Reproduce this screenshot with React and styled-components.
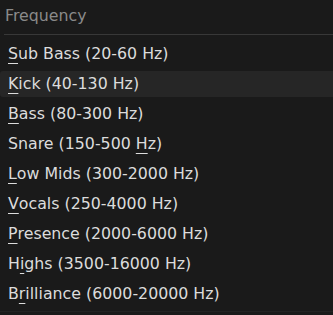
import React from 'react';
import styled, { createGlobalStyle } from 'styled-components';

const GlobalStyle = createGlobalStyle`
  html, body {
    margin: 0;
    padding: 0;
    background: #1a1a1a;
  }
  body {
    font-family: "DejaVu Sans", sans-serif;
  }
  * {
    box-sizing: border-box;
  }
`;

const bands = [
  { pre: '', key: 'S', post: 'ub Bass (20-60 Hz)' },
  { pre: '', key: 'K', post: 'ick (40-130 Hz)', active: true },
  { pre: '', key: 'B', post: 'ass (80-300 Hz)' },
  { pre: 'Snare (150-500 ', key: 'H', post: 'z)' },
  { pre: '', key: 'L', post: 'ow Mids (300-2000 Hz)' },
  { pre: '', key: 'V', post: 'ocals (250-4000 Hz)' },
  { pre: '', key: 'P', post: 'resence (2000-6000 Hz)' },
  { pre: 'H', key: 'i', post: 'ghs (3500-16000 Hz)' },
  { pre: 'B', key: 'r', post: 'illiance (6000-20000 Hz)' },
];

const App = () => (
  <Menu>
    <GlobalStyle />
    <Title>Frequency</Title>
    <Separator />
    <List>
      {bands.map((b) => (
        <Item key={b.pre + b.key + b.post} active={b.active}>
          {b.pre}
          <Mnemonic>{b.key}</Mnemonic>
          {b.post}
        </Item>
      ))}
    </List>
  </Menu>
);
export default App;

const Menu = styled.div`
  width: 333px;
  height: 312px;
  background: #1a1a1a;
  border-bottom: 1px solid #232323;
  display: flex;
  flex-direction: column;
  overflow: hidden;
`;

const Title = styled.div`
  height: 34px;
  padding: 0 0 3px 5px;
  display: flex;
  align-items: center;
  font-size: 15.8px;
  color: #8a8a8a;
`;

const Separator = styled.div`
  height: 1px;
  margin-left: 4px;
  background: #383838;
`;

const List = styled.div`
  display: flex;
  flex-direction: column;
  padding-top: 4px;
`;

const Item = styled.div`
  height: 26px;
  margin: 2px 0;
  padding: 0 0 2px 8px;
  display: flex;
  align-items: center;
  white-space: pre;
  font-size: 15.8px;
  color: #dcdcdc;
  border-radius: 3px 0 0 3px;
  background: ${({ active }) => (active ? '#262626' : 'transparent')};
`;

const Mnemonic = styled.span`
  text-decoration: underline;
  text-decoration-thickness: 1px;
  text-underline-offset: 4px;
`;
